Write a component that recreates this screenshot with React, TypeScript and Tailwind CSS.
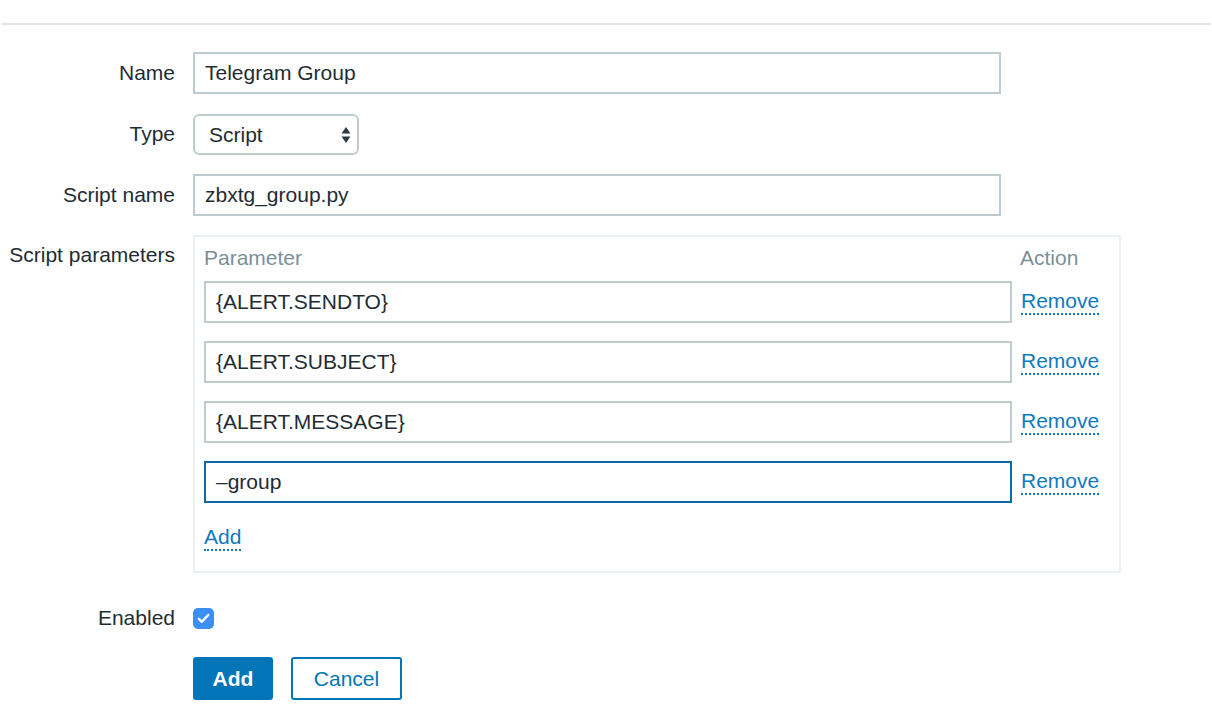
import React from "react";

function Label({ children, top = false }: { children: React.ReactNode; top?: boolean }) {
  return (
    <div className={`w-[175px] shrink-0 text-right text-[21px] text-[#1f2c33] ${top ? "pt-[4px]" : "flex items-center justify-end"}`}>
      {children}
    </div>
  );
}

function TextInput({ value, focused = false, w = "w-[808px]" }: { value: string; focused?: boolean; w?: string }) {
  return (
    <div
      className={`${w} h-[42px] flex items-center pl-[10px] text-[21px] text-[#1f2c33] bg-white border-2 ${
        focused ? "border-[#0a6aa8]" : "border-[#bfcbd1]"
      }`}
    >
      {value}
    </div>
  );
}

function DottedLink({ children }: { children: React.ReactNode }) {
  return (
    <span className="text-[21px] leading-[24px] text-[#0f7ac2] border-b-2 border-dotted border-[#0f7ac2] pb-[1px]">
      {children}
    </span>
  );
}

export default function App() {
  const params = ["{ALERT.SENDTO}", "{ALERT.SUBJECT}", "{ALERT.MESSAGE}", "\u2013group"];
  return (
    <div className="w-[1212px] h-[722px] bg-white overflow-hidden font-['Liberation_Sans',Arial,sans-serif]">
      <div className="mt-[23px] ml-[2px] mr-[1px] h-[2px] bg-[#dde3e7]" />
      <div className="mt-[27px] flex flex-col">
        <div className="flex gap-[18px] h-[42px]">
          <Label>Name</Label>
          <TextInput value="Telegram Group" />
        </div>
        <div className="flex gap-[18px] h-[42px] mt-[19px]">
          <Label>Type</Label>
          <div className="w-[166px] h-[41px] mt-[1px] rounded-[6px] border-2 border-[#bfcbd1] bg-white flex items-center justify-between pl-[14px] pr-[6px] text-[21px] text-[#1f2c33]">
            <span>Script</span>
            <svg width="10" height="18" viewBox="0 0 10 18">
              <path d="M5 1 L9.5 7.5 L0.5 7.5 Z" fill="#2b3a42" />
              <path d="M5 17 L9.5 10.5 L0.5 10.5 Z" fill="#2b3a42" />
            </svg>
          </div>
        </div>
        <div className="flex gap-[18px] h-[42px] mt-[19px]">
          <Label>Script name</Label>
          <TextInput value="zbxtg_group.py" />
        </div>
        <div className="flex gap-[18px] mt-[19px]">
          <Label top>Script parameters</Label>
          <div className="w-[928px] h-[338px] border-2 border-[#eef1f3] pl-[9px] pt-[8px]">
            <div className="flex h-[26px] items-center text-[21px] text-[#7c8f99]">
              <div className="w-[816px]">Parameter</div>
              <div>Action</div>
            </div>
            <div className="mt-[10px] flex flex-col gap-[18px]">
              {params.map((p, i) => (
                <div key={i} className="flex items-center h-[42px]">
                  <TextInput value={p} focused={i === 3} w="w-[808px]" />
                  <div className="ml-[9px] -mt-[1px]">
                    <DottedLink>Remove</DottedLink>
                  </div>
                </div>
              ))}
            </div>
            <div className="mt-[22px]">
              <DottedLink>Add</DottedLink>
            </div>
          </div>
        </div>
        <div className="flex gap-[18px] mt-[32px] h-[26px] items-center">
          <Label>Enabled</Label>
          <div className="w-[21px] h-[21px] rounded-[5px] bg-[#3b8ff5] flex items-center justify-center">
            <svg width="13" height="11" viewBox="0 0 13 11">
              <path d="M1.8 5.8 L4.9 8.8 L11.2 2" stroke="white" strokeWidth="2.4" fill="none" strokeLinecap="round" strokeLinejoin="round" />
            </svg>
          </div>
        </div>
        <div className="flex mt-[26px] ml-[193px] gap-[18px]">
          <div className="w-[80px] h-[43px] rounded-[3px] bg-[#0275b8] text-white font-bold text-[21px] flex items-center justify-center">
            Add
          </div>
          <div className="w-[111px] h-[43px] rounded-[3px] border-2 border-[#0275b8] bg-white text-[#0275b8] text-[21px] flex items-center justify-center">
            Cancel
          </div>
        </div>
      </div>
    </div>
  );
}
